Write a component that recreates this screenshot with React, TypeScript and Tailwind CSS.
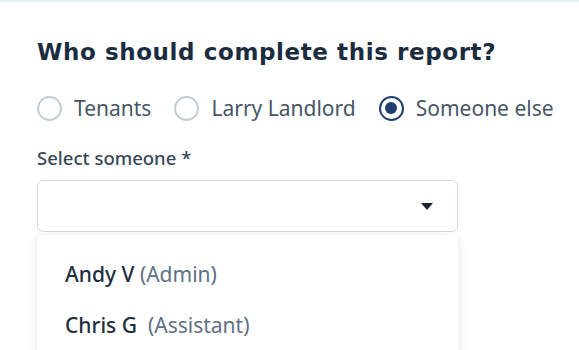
import React from "react";

function Radio({ label, checked }: { label: string; checked?: boolean }) {
  return (
    <label className="flex items-center gap-[12px]">
      {checked ? (
        <span className="w-[25px] h-[25px] rounded-full border-[2.5px] border-[#1f3f6e] flex items-center justify-center">
          <span className="w-[12px] h-[12px] rounded-full bg-[#1f3f6e]" />
        </span>
      ) : (
        <span className="w-[25px] h-[25px] rounded-full border-[2px] border-[#c3ccd6]" />
      )}
      <span>{label}</span>
    </label>
  );
}

export default function App() {
  return (
    <div className="w-[579px] h-[350px] overflow-hidden bg-white border-t-[2px] border-[#e8edf2] relative" style={{ fontFamily: '"Noto Sans", "Open Sans", sans-serif' }}>
      <div className="pl-[37px] pt-[35px]">
        <h1 className="text-[23px] leading-[30px] font-bold text-[#1b2c3f] tracking-[0.6px]" style={{ fontFamily: '"DejaVu Sans", Inter, sans-serif' }}>
          Who should complete this report?
        </h1>
        <div className="mt-[27px] h-[28px] flex items-center gap-[23px] text-[21px] leading-[28px] text-[#475667]">
          <Radio label="Tenants" />
          <Radio label="Larry Landlord" />
          <Radio label="Someone else" checked />
        </div>
        <div className="mt-[24px] text-[18.5px] leading-[24px] font-medium text-[#3a4756]">Select someone *</div>
        <div className="mt-[10px] w-[421px] h-[52px] border border-[#d3d9e0] rounded-[6px] flex items-center justify-end pr-[24px]">
          <svg width="12" height="7" viewBox="0 0 12 7"><path d="M0 0 H12 L6 7 Z" fill="#1b2633" /></svg>
        </div>
        <div className="mt-[3px] w-[421px] h-[200px] bg-white rounded-[6px] shadow-[0_2px_10px_rgba(30,45,70,0.12)] pt-[25px] pl-[28px] text-[21px] leading-[28px] font-medium">
          <div className="text-[#1f2f40]">Andy V <span className="text-[#5f7183] font-normal">(Admin)</span></div>
          <div className="mt-[23px] text-[#1f2f40]">Chris G&nbsp; <span className="text-[#5f7183] font-normal">(Assistant)</span></div>
        </div>
      </div>
    </div>
  );
}
